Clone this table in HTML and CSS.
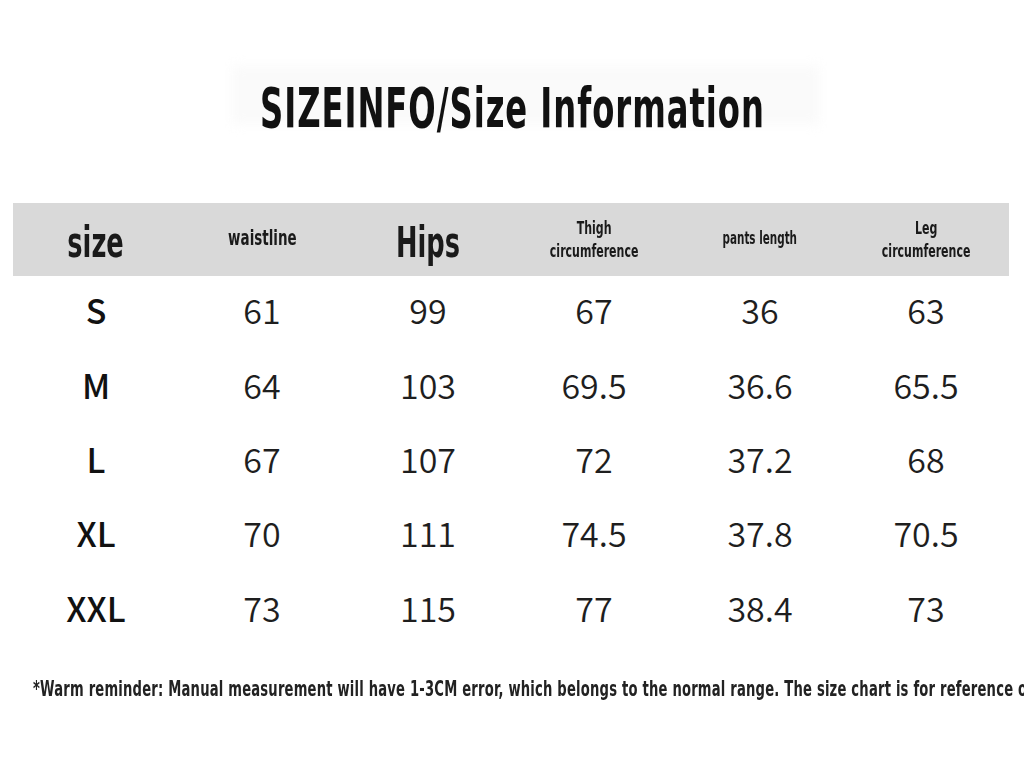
FILE: index.html
```html
<!DOCTYPE html>
<html>
<head>
<meta charset="utf-8">
<link rel="stylesheet" href="styles.css">
</head>
<body>
<div class="page">
  <header class="title-wrap">
    <div class="ghost"></div>
    <h1 class="title"><span class="squeeze">SIZEINFO/Size Information</span></h1>
  </header>
  <div class="table">
    <div class="row head">
      <div class="cell"><span class="squeeze h-big">size</span></div>
      <div class="cell"><span class="squeeze h-mid">waistline</span></div>
      <div class="cell"><span class="squeeze h-big">Hips</span></div>
      <div class="cell"><span class="squeeze h-small">Thigh<br>circumference</span></div>
      <div class="cell"><span class="squeeze h-tiny">pants length</span></div>
      <div class="cell"><span class="squeeze h-small">Leg<br>circumference</span></div>
    </div>
    <div class="row"><div class="cell sz">S</div><div class="cell">61</div><div class="cell">99</div><div class="cell">67</div><div class="cell">36</div><div class="cell">63</div></div>
    <div class="row"><div class="cell sz">M</div><div class="cell">64</div><div class="cell">103</div><div class="cell">69.5</div><div class="cell">36.6</div><div class="cell">65.5</div></div>
    <div class="row"><div class="cell sz">L</div><div class="cell">67</div><div class="cell">107</div><div class="cell">72</div><div class="cell">37.2</div><div class="cell">68</div></div>
    <div class="row"><div class="cell sz">XL</div><div class="cell">70</div><div class="cell">111</div><div class="cell">74.5</div><div class="cell">37.8</div><div class="cell">70.5</div></div>
    <div class="row"><div class="cell sz">XXL</div><div class="cell">73</div><div class="cell">115</div><div class="cell">77</div><div class="cell">38.4</div><div class="cell">73</div></div>
  </div>
  <p class="note"><span class="squeeze-left">*Warm reminder: Manual measurement will have 1-3CM error, which belongs to the normal range. The size chart is for reference only.</span></p>
</div>
</body>
</html>
```
FILE: styles.css
```css
html, body { margin: 0; padding: 0; background: #fff; }
body { width: 1024px; height: 768px; overflow: hidden; }
.page { position: relative; }
.title-wrap {
  position: relative;
  height: 203px;
  display: flex;
  justify-content: center;
}
.ghost {
  position: absolute;
  left: 232px; top: 66px; width: 588px; height: 58px;
  background: #fafafa;
  filter: blur(6px);
}
.title {
  position: relative;
  margin: 0;
  padding-top: 76px;
  font-family: "DejaVu Sans Condensed", "DejaVu Sans", sans-serif;
  font-weight: bold;
  font-size: 56px;
  line-height: 64px;
  letter-spacing: 1.5px;
  color: #111;
  white-space: nowrap;
}
.title .squeeze { transform: scaleX(0.64); }
.squeeze { display: inline-block; transform: scaleX(0.68); transform-origin: center; white-space: nowrap; }
.table { margin-left: 13px; width: 996px; }
.row {
  display: grid;
  grid-template-columns: repeat(6, 166px);
  height: 74.4px;
  align-items: center;
}
.row.head { background: #d9d9d9; height: 73px; }
.cell {
  text-align: center;
  font-family: "Noto Sans CJK SC", "Noto Sans", sans-serif;
  font-weight: 350;
  font-size: 34px;
  color: #1e1e1e;
  line-height: 1;
  padding-bottom: 6px;
}
.cell.sz { font-weight: 500; color: #111; }
.head .cell {
  display: flex;
  justify-content: center;
  align-items: center;
  height: 73px;
  padding: 0;
  font-family: "DejaVu Sans Condensed", "DejaVu Sans", sans-serif;
  font-weight: bold;
  color: #1a1a1a;
}
.h-big { font-size: 42px; line-height: 42px; padding-top: 6px; }
.h-mid { font-size: 22px; line-height: 24px; padding-bottom: 4px; }
.h-small { font-size: 18px; line-height: 23px; padding-bottom: 2px; }
.h-tiny { font-size: 17px; line-height: 20px; padding-bottom: 4px; }
.note {
  margin: 28px 0 0 33px;
  white-space: nowrap;
  font-family: "DejaVu Sans Condensed", "DejaVu Sans", sans-serif;
  font-weight: bold;
  font-size: 22px;
  letter-spacing: 0.3px;
  color: #222;
}
.squeeze-left { display: inline-block; transform: scaleX(0.664); transform-origin: left center; }
```
